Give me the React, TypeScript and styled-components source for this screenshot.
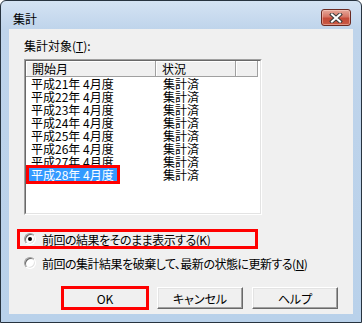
import * as React from 'react';
import styled, { createGlobalStyle, css } from 'styled-components';

var GlobalStyle = createGlobalStyle`
	html, body {
		margin: 0;
		padding: 0;
		background: #ffffff;
	}
	body {
		font-family: "Noto Sans CJK JP", "Noto Sans", sans-serif;
		font-size: 12px;
		color: #000000;
		font-feature-settings: "palt";
	}
`;

var rows = ['21', '22', '23', '24', '25', '26', '27', '28'];

export default function App() {
	return (
		<>
			<GlobalStyle />
			<Window>
				<TitleBar>
					<Title>集計</Title>
					<CloseButton aria-label='Close'>
						<svg width='14' height='10' viewBox='0 0 14 10'>
							<path d='M3 1.5 L11 8.5 M11 1.5 L3 8.5' stroke='#3b3b3b' strokeWidth='4' strokeLinecap='square' fill='none' />
							<path d='M3 1.5 L11 8.5 M11 1.5 L3 8.5' stroke='#ffffff' strokeWidth='2' strokeLinecap='square' fill='none' />
						</svg>
					</CloseButton>
				</TitleBar>
				<Content>
					<FieldLabel>
						集計対象(<U>T</U>):
					</FieldLabel>
					<ListFrame>
						<ListInner>
							<Header>
								<HeaderCell $width={130}>開始月</HeaderCell>
								<HeaderCell $width={80}>状況</HeaderCell>
								<HeaderCell $width={22} />
							</Header>
							{rows.map((n, i) => {
								var selected = i === rows.length - 1;
								return (
									<Row key={n}>
										<NameCell>
											<ItemText $selected={selected}>平成{n}年 4月度</ItemText>
										</NameCell>
										<StatusCell>集計済</StatusCell>
									</Row>
								);
							})}
						</ListInner>
					</ListFrame>
					<RadioRow $marked>
						<RadioDot $checked />
						<RadioLabel>
							前回の結果をそのまま表示する(<U>K</U>)
						</RadioLabel>
					</RadioRow>
					<RadioRow>
						<RadioDot />
						<RadioLabel>
							前回の集計結果を破棄して、最新の状態に更新する(<U>N</U>)
						</RadioLabel>
					</RadioRow>
					<ButtonRow>
						<PushButton $marked>OK</PushButton>
						<PushButton>キャンセル</PushButton>
						<PushButton>ヘルプ</PushButton>
					</ButtonRow>
				</Content>
			</Window>
		</>
	);
}

var Window = styled.div`
	width: 362px;
	height: 323px;
	box-sizing: border-box;
	border: 1px solid #27333f;
	border-radius: 6px 6px 0 0;
	background: linear-gradient(to bottom, #d4e3f3 0px, #bfd4eb 28px, #b9d1ea 100%);
	display: flex;
	flex-direction: column;
	overflow: hidden;
`;

var TitleBar = styled.div`
	height: 28px;
	flex: none;
	display: flex;
	justify-content: space-between;
	align-items: flex-start;
`;

var Title = styled.div`
	margin: 11px 0 0 12px;
	line-height: 13px;
	font-size: 12px;
`;

var CloseButton = styled.div`
	width: 30px;
	height: 17px;
	margin: 8px 10px 0 0;
	box-sizing: border-box;
	border: 1px solid #6b2a22;
	border-radius: 3px;
	background: linear-gradient(to bottom, #e6a89a 0%, #d67565 45%, #c44a38 55%, #c95a45 100%);
	box-shadow: inset 0 0 0 1px rgba(255, 220, 210, 0.45);
	display: flex;
	align-items: center;
	justify-content: center;
`;

var Content = styled.div`
	flex: 1;
	margin: 0 8px 8px 8px;
	background: #f0f0f0;
	padding-top: 10px;
	display: flex;
	flex-direction: column;
	align-items: flex-start;
`;

var U = styled.span`
	text-decoration: underline;
	text-underline-offset: 1px;
`;

var FieldLabel = styled.div`
	margin-left: 15px;
	line-height: 13px;
`;

var ListFrame = styled.div`
	margin: 7px 0 0 15px;
	width: 238px;
	height: 156px;
	box-sizing: border-box;
	border: 1px solid;
	border-color: #a0a0a0 #ffffff #ffffff #a0a0a0;
`;

var ListInner = styled.div`
	height: 100%;
	box-sizing: border-box;
	border: 1px solid;
	border-color: #696969 #e3e3e3 #e3e3e3 #696969;
	background: #ffffff;
`;

var Header = styled.div`
	display: flex;
	height: 16px;
`;

var HeaderCell = styled.div<{ $width: number }>`
	width: ${(p) => p.$width}px;
	box-sizing: border-box;
	background: #f0f0f0;
	border-right: 1px solid #a0a0a0;
	border-bottom: 1px solid #a0a0a0;
	box-shadow: inset 1px 1px #ffffff;
	padding-left: 6px;
	line-height: 15px;
	white-space: nowrap;
`;

var Row = styled.div`
	display: flex;
	height: 13px;
	line-height: 13px;
	white-space: nowrap;
`;

var NameCell = styled.div`
	width: 130px;
	padding-left: 3px;
	box-sizing: border-box;
`;

var ItemText = styled.span<{ $selected?: boolean }>`
	display: inline-block;
	padding: 0 3px 0 2px;
	height: 13px;
	${(p) =>
		p.$selected &&
		css`
			background: #3399ff;
			color: #ffffff;
			outline: 3px solid #ff0000;
		`}
`;

var StatusCell = styled.div`
	padding-left: 7px;
`;

var RadioRow = styled.div<{ $marked?: boolean }>`
	display: flex;
	align-items: center;
	gap: 6px;
	height: 14px;
	width: 235px;
	box-sizing: border-box;
	margin: 17px 0 0 11px;
	padding-left: 4px;
	line-height: 13px;
	white-space: nowrap;
	& + & {
		margin-top: 10px;
	}
	${(p) =>
		p.$marked &&
		css`
			outline: 3px solid #ff0000;
		`}
`;

var RadioLabel = styled.span`
	letter-spacing: -0.5px;
`;

var RadioDot = styled.span<{ $checked?: boolean }>`
	position: relative;
	flex: none;
	width: 12px;
	height: 12px;
	box-sizing: border-box;
	border-radius: 50%;
	border: 1px solid;
	border-color: #a0a0a0 #ffffff #ffffff #a0a0a0;
	background: #ffffff;
	box-shadow: inset 1px 1px #696969, inset -1px -1px #e3e3e3;
	&::after {
		content: '';
		display: ${(p) => (p.$checked ? 'block' : 'none')};
		position: absolute;
		left: 3px;
		top: 3px;
		width: 4px;
		height: 4px;
		border-radius: 50%;
		background: #000000;
	}
`;

var ButtonRow = styled.div`
	align-self: stretch;
	display: flex;
	justify-content: flex-end;
	gap: 9px;
	margin-top: 17px;
	padding-right: 15px;
`;

var PushButton = styled.div<{ $marked?: boolean }>`
	width: 86px;
	height: 22px;
	box-sizing: border-box;
	border: 1px solid;
	border-color: #ffffff #696969 #696969 #ffffff;
	box-shadow: inset -1px -1px #a0a0a0, inset 1px 1px #e3e3e3;
	background: #f0f0f0;
	display: flex;
	align-items: center;
	justify-content: center;
	line-height: 13px;
	${(p) =>
		p.$marked &&
		css`
			outline: 3px solid #ff0000;
			outline-offset: -2px;
		`}
`;
